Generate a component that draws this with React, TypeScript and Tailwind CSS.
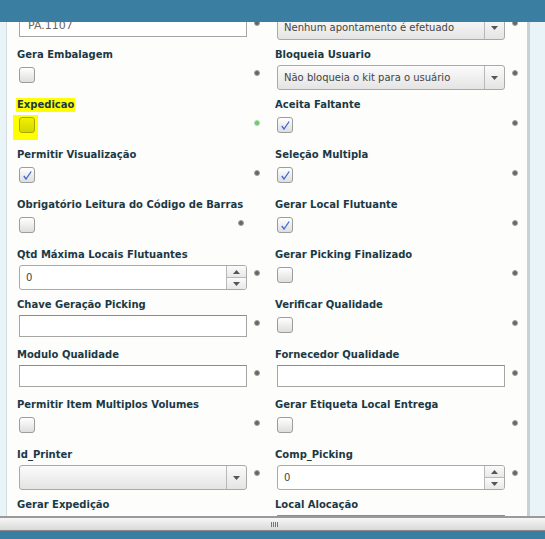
import React from 'react';

type Kind = 'text' | 'select' | 'check' | 'spin';

interface Field {
  label: string;
  kind: Kind;
  value?: string;
  checked?: boolean;
  dotGap?: string;
  highlight?: boolean;
  greenDot?: boolean;
}

// first row sits under the header bar, its labels are scrolled out of view
const left: Field[] = [
  { label: '', kind: 'text', value: 'PA.1107' },
  { label: 'Gera Embalagem', kind: 'check' },
  { label: 'Expedicao', kind: 'check', highlight: true, greenDot: true },
  { label: 'Permitir Visualização', kind: 'check', checked: true },
  { label: 'Obrigatório Leitura do Código de Barras', kind: 'check', dotGap: 'w-[221px]' },
  { label: 'Qtd Máxima Locais Flutuantes', kind: 'spin', value: '0' },
  { label: 'Chave Geração Picking', kind: 'text' },
  { label: 'Modulo Qualidade', kind: 'text' },
  { label: 'Permitir Item Multiplos Volumes', kind: 'check' },
  { label: 'Id_Printer', kind: 'select', value: '' },
  { label: 'Gerar Expedição', kind: 'check' },
];

const right: Field[] = [
  { label: '', kind: 'select', value: 'Nenhum apontamento é efetuado' },
  { label: 'Bloqueia Usuario', kind: 'select', value: 'Não bloqueia o kit para o usuário' },
  { label: 'Aceita Faltante', kind: 'check', checked: true },
  { label: 'Seleção Multipla', kind: 'check', checked: true },
  { label: 'Gerar Local Flutuante', kind: 'check', checked: true },
  { label: 'Gerar Picking Finalizado', kind: 'check' },
  { label: 'Verificar Qualidade', kind: 'check' },
  { label: 'Fornecedor Qualidade', kind: 'text' },
  { label: 'Gerar Etiqueta Local Entrega', kind: 'check' },
  { label: 'Comp_Picking', kind: 'spin', value: '0' },
  { label: 'Local Alocação', kind: 'text' },
];

const Tri = ({ up }: { up?: boolean }) => (
  <svg width="7" height="4" viewBox="0 0 7 4">
    <path d={up ? 'M0 4 L3.5 0 L7 4 Z' : 'M0 0 L7 0 L3.5 4 Z'} fill="#555" />
  </svg>
);

const Checkbox = ({ checked, highlight }: { checked?: boolean; highlight?: boolean }) => (
  <div className="relative mt-[5px] ml-[2px] w-[16px] h-[16px]">
    {highlight && <div className="absolute -left-[6px] -top-[2px] w-[25px] h-[25px] bg-[#ffff00]" />}
    <div
      className={
        highlight
          ? 'relative w-[16px] h-[16px] rounded-[3px] border border-[#a8a800] bg-gradient-to-b from-[#f0f000] to-[#d6d600]'
          : 'relative w-[16px] h-[16px] rounded-[3px] border border-[#9c9c9c] bg-gradient-to-b from-[#ffffff] to-[#dedede]'
      }
    >
      {checked && (
        <svg className="absolute left-[3px] top-[3px]" width="9" height="9" viewBox="0 0 9 9">
          <path d="M0.8 5 L3 8 L8.2 0.5" fill="none" stroke="#3d66dd" strokeWidth="1.3" />
        </svg>
      )}
    </div>
  </div>
);

const Control = ({ f }: { f: Field }) => {
  if (f.kind === 'check') return <Checkbox checked={f.checked} highlight={f.highlight} />;
  if (f.kind === 'text')
    return (
      <div className="mt-[3px] ml-[2px] w-[228px] h-[22px] border border-[#a6a6a6] border-t-[#8c8c8c] bg-white flex items-center pl-[8px] text-[11px] text-[#666]">
        {f.value}
      </div>
    );
  if (f.kind === 'select')
    return (
      <div className="mt-[3px] ml-[2px] w-[228px] h-[25px] rounded-[3px] border border-[#a9a9a9] bg-gradient-to-b from-[#fbfbfb] to-[#e4e4e4] flex">
        <div className="flex-1 flex items-center pl-[6px] text-[10px] text-[#444] whitespace-nowrap overflow-hidden">
          {f.value}
        </div>
        <div className="w-[20px] border-l border-[#b8b8b8] flex items-center justify-center">
          <Tri />
        </div>
      </div>
    );
  return (
    <div className="mt-[3px] ml-[2px] w-[228px] h-[25px] rounded-[3px] border border-[#a9a9a9] bg-white flex overflow-hidden">
      <div className="flex-1 flex items-center pl-[6px] text-[10px] text-[#444]">{f.value}</div>
      <div className="w-[20px] border-l border-[#b8b8b8] flex flex-col">
        <div className="flex-1 flex items-center justify-center bg-gradient-to-b from-[#fbfbfb] to-[#e8e8e8] border-b border-[#b8b8b8]">
          <Tri up />
        </div>
        <div className="flex-1 flex items-center justify-center bg-gradient-to-b from-[#fbfbfb] to-[#e8e8e8]">
          <Tri />
        </div>
      </div>
    </div>
  );
};

const Row = ({ f }: { f: Field }) => (
  <div className="h-[50px]">
    <div className="h-[14px] leading-[14px] text-[10px] font-bold text-[#1b3945] whitespace-nowrap">
      <span className={f.highlight ? 'inline-block h-[14px] bg-[#ffff00] -ml-[1px] pl-[1px] pr-[1px]' : ''}>
        {f.label}
      </span>
    </div>
    <div className="flex items-start">
      <div className={f.dotGap ?? 'w-[237px]'}>
        <Control f={f} />
      </div>
      <div
        className={
          f.greenDot
            ? 'mt-[8px] w-[6px] h-[6px] rounded-full bg-[#76c476] border border-[#a8dca8]'
            : 'mt-[8px] w-[6px] h-[6px] rounded-full bg-[#666] border border-[#a0a0a0]'
        }
      />
    </div>
  </div>
);

export default function App() {
  return (
    <div
      className="w-[545px] h-[539px] flex flex-col overflow-hidden bg-[#e9f4f8]"
      style={{ fontFamily: '"DejaVu Sans", Verdana, sans-serif' }}
    >
      <div className="h-[22px] bg-[#3a7fa1] shrink-0" />
      <div className="flex-1 flex overflow-hidden">
        <div className="w-[7px] bg-[#e9f4f8] border-r border-[#d4dcdf]" />
        <div className="w-[520px] bg-[#fdfdfb] overflow-hidden">
          <div className="-mt-[24px] pl-[10px] flex">
            <div className="w-[258px]">
              {left.map((f, i) => (
                <Row key={i} f={f} />
              ))}
            </div>
            <div className="w-[250px]">
              {right.map((f, i) => (
                <Row key={i} f={f} />
              ))}
            </div>
          </div>
        </div>
        <div className="w-[3px] bg-[#c8d0d3]" />
        <div className="flex-1 bg-[#e9f4f8]" />
      </div>
      <div className="h-[15px] shrink-0 border-t-2 border-[#9a9a9a] border-b border-b-[#8a8a8a] bg-gradient-to-b from-[#f7f7f7] to-[#d9d9d9] flex items-center justify-center">
        <div className="flex gap-[1px] pl-[4px]">
          <div className="w-[1px] h-[5px] bg-[#777]" />
          <div className="w-[1px] h-[5px] bg-[#777]" />
          <div className="w-[1px] h-[5px] bg-[#777]" />
          <div className="w-[1px] h-[5px] bg-[#777]" />
        </div>
      </div>
      <div className="h-[8px] shrink-0 bg-[#3a7fa1]" />
    </div>
  );
}
